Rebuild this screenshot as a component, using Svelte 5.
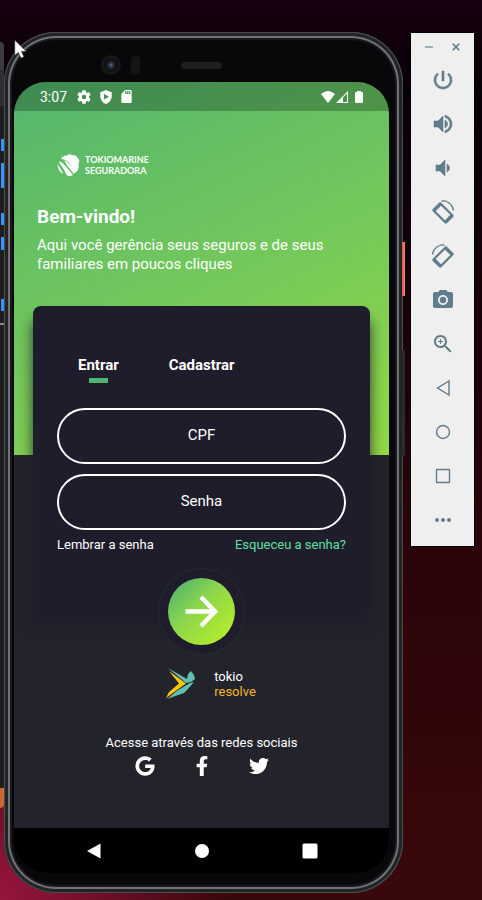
<script>
  let cpf = $state('');
  let password = $state('');
  let tab = $state('Entrar');
  const tabs = ['Entrar', 'Cadastrar'];

  const landscape =
    'M16.48 1.4c3.6 1.4 6.3 4.9 6.6 9.1h-1.5c-.4-5-4.4-8.6-9-9l-1.4.4-1-1C12.500-.2 14.600.6 16.480 1.400zM10.230 2.750c-.59-.59-1.540-.59-2.120 0L1.750 9.110c-.59.59-.59 1.540 0 2.120l12.020 12.020c.59.59 1.540.59 2.120 0l6.360-6.360c.59-.59.59-1.540 0-2.120L10.230 2.750zm3.700 17.500L4.700 11.070l5.400-5.400 9.200 9.200-5.370 5.380z';

  const tools = [
    { label: 'Power', bold: true, d: 'M13 3h-2v10h2V3zm4.83 2.17l-1.42 1.42C17.99 7.86 19 9.81 19 12c0 3.87-3.13 7-7 7s-7-3.13-7-7c0-2.190 1.010-4.140 2.580-5.420L6.170 5.170C4.230 6.820 3 9.260 3 12c0 4.970 4.030 9 9 9s9-4.030 9-9c0-2.740-1.230-5.180-3.170-6.830z' },
    { label: 'Volume up', bold: true, d: 'M3 9v6h4l5 5V4L7 9H3zm13.5 3c0-1.77-1.020-3.290-2.500-4.030v8.050c1.480-.73 2.500-2.250 2.500-4.020zM14 3.230v2.060c2.890.86 5 3.540 5 6.710s-2.110 5.850-5 6.710v2.060c4.010-.91 7-4.490 7-8.770s-2.990-7.860-7-8.770z' },
    { label: 'Volume down', bold: true, d: 'M18.500 12c0-1.770-1.020-3.290-2.500-4.030v8.050c1.480-.73 2.500-2.250 2.500-4.020zM5 9v6h4l5 5V4L9 9H5z' },
    { label: 'Rotate left', d: landscape },
    { label: 'Rotate right', d: landscape, flip: true },
    { label: 'Screenshot', d: 'M9 2L7.170 4H4c-1.100 0-2 .9-2 2v12c0 1.100.9 2 2 2h16c1.100 0 2-.9 2-2V6c0-1.100-.9-2-2-2h-3.170L15 2H9zm3 15c-2.760 0-5-2.240-5-5s2.240-5 5-5 5 2.240 5 5-2.240 5-5 5zm0-8.200a3.200 3.200 0 1 0 0 6.400 3.200 3.200 0 0 0 0-6.400z' },
    { label: 'Zoom', d: 'M15.500 14h-.79l-.28-.27C15.410 12.590 16 11.110 16 9.500 16 5.910 13.090 3 9.500 3S3 5.910 3 9.500 5.910 16 9.500 16c1.610 0 3.090-.59 4.230-1.570l.27.28v.79l5 4.990L20.490 19l-4.990-5zm-6 0C7.010 14 5 11.990 5 9.500S7.010 5 9.500 5 14 7.010 14 9.500 11.990 14 9.500 14zM9 7h1v2h2v1h-2v2H9v-2H7V9h2z' },
    { label: 'Back', line: 'M18 5v14L6.500 12z' },
    { label: 'Home', line: 'M12 5.500a6.500 6.500 0 1 0 0 13 6.500 6.500 0 0 0 0-13z' },
    { label: 'Overview', line: 'M6 5.500h12q.5 0 .5.500v12q0 .5-.5.500H6q-.5 0-.5-.500V6q0-.5.5-.500z' },
    { label: 'More', d: 'M6 10a2 2 0 1 0 0 4 2 2 0 0 0 0-4zm6 0a2 2 0 1 0 0 4 2 2 0 0 0 0-4zm6 0a2 2 0 1 0 0 4 2 2 0 0 0 0-4z' }
  ];

  const socials = [
    { label: 'Google', box: '0 0 488 512', d: 'M488 261.800C488 403.300 391.100 504 248 504 110.800 504 0 393.200 0 256S110.800 8 248 8c66.800 0 123 24.500 166.300 64.900l-67.500 64.900C258.500 52.600 94.300 116.600 94.300 256c0 86.500 69.100 156.600 153.700 156.600 98.200 0 135-70.400 140.800-106.900H248v-85.300h236.100c2.300 12.700 3.900 24.900 3.900 41.400z' },
    { label: 'Facebook', box: '0 0 320 512', d: 'M279.140 288l14.220-92.660h-88.910v-60.130c0-25.350 12.420-50.060 52.240-50.060h40.420V6.260S260.430 0 225.360 0c-73.220 0-121.080 44.380-121.080 124.720v70.620H22.890V288h81.390v224h100.170V288z' },
    { label: 'Twitter', box: '0 0 512 512', d: 'M459.370 151.716c.325 4.548.325 9.097.325 13.645 0 138.720-105.583 298.558-298.558 298.558-59.452 0-114.680-17.219-161.137-47.106 8.447.974 16.568 1.299 25.340 1.299 49.055 0 94.213-16.568 130.274-44.832-46.132-.975-84.792-31.188-98.112-72.772 6.498.974 12.995 1.624 19.818 1.624 9.421 0 18.843-1.300 27.614-3.573-48.081-9.747-84.143-51.980-84.143-102.985v-1.299c13.969 7.797 30.214 12.670 47.431 13.319-28.264-18.843-46.781-51.005-46.781-87.391 0-19.492 5.197-37.360 14.294-52.954 51.655 63.675 129.300 105.258 216.365 109.807-1.624-7.797-2.599-15.918-2.599-24.040 0-57.828 46.782-104.934 104.934-104.934 30.213 0 57.502 12.670 76.670 33.137 23.715-4.548 46.456-13.320 66.599-25.340-7.798 24.366-24.366 44.833-46.132 57.827 21.117-2.273 41.584-8.122 60.426-16.243-14.292 20.791-32.161 39.308-52.628 54.253z' }
  ];
</script>

<div class="desktop">
  <div class="behind" aria-hidden="true">
    <span class="title"></span>
    <i style:top="97px" style:height="12px"></i>
    <i style:top="121px" style:height="25px"></i>
    <i style:top="171px" style:height="12px"></i>
    <i style:top="195px" style:height="13px"></i>
    <i style:top="257px" style:height="12px"></i>
    <span class="rule"></span>
    <span class="foot"></span>
  </div>

  <div class="phone">
    <span class="side power"></span>
    <span class="side volume"></span>
    <div class="bezel"><span class="lens"></span><span class="sensor"></span><span class="speaker"></span></div>

    <div class="screen">
      <div class="status">
        <span class="time">3:07</span>
        <svg width="14" height="14" viewBox="2 2 20 20"><path fill-rule="evenodd" d="M19.140 12.940c.04-.3.060-.61.060-.94s-.02-.64-.07-.94l2.030-1.580c.18-.14.230-.41.120-.61l-1.920-3.320c-.12-.22-.37-.29-.59-.22l-2.390.96c-.5-.38-1.030-.7-1.620-.94l-.36-2.540c-.04-.24-.24-.41-.48-.41h-3.840c-.24 0-.43.17-.47.41l-.36 2.540c-.59.24-1.130.57-1.620.94l-2.390-.96c-.22-.08-.47 0-.59.22L2.740 8.870c-.12.21-.08.470.12.610l2.030 1.580c-.05.3-.09.630-.09.940s.02.640.070.940l-2.030 1.580c-.18.140-.23.410-.12.610l1.920 3.320c.12.220.37.290.59.220l2.390-.96c.5.380 1.030.7 1.620.94l.36 2.540c.05.240.24.410.48.410h3.840c.24 0 .44-.17.470-.41l.36-2.540c.59-.24 1.130-.56 1.620-.94l2.390.96c.22.080.47 0 .59-.22l1.920-3.320c.12-.22.070-.47-.12-.61l-2.010-1.580zM12 15.200a3.200 3.200 0 1 1 0-6.400 3.200 3.200 0 0 1 0 6.400z" /></svg>
        <svg width="12" height="14" viewBox="3 1 18 22"><path fill-rule="evenodd" d="M12 1L3 4.500V11c0 5.600 3.800 10.700 9 12 5.200-1.300 9-6.400 9-12V4.500L12 1zM9 7l7.500 4.500L9 16z" /></svg>
        <svg width="11" height="13" viewBox="4 2 16 20"><path fill-rule="evenodd" d="M18 2h-8L4 8v12c0 1.100.9 2 2 2h12c1.100 0 2-.9 2-2V4c0-1.100-.9-2-2-2zm-6 6h-2V4h2v4zm3 0h-2V4h2v4zm3 0h-2V4h2v4z" /></svg>
        <span class="spacer"></span>
        <svg width="14" height="12" viewBox="0 0 14 12"><path d="M0 3Q7-3 14 3L7 12z" /></svg>
        <svg class="signal" width="12" height="12" viewBox="0 0 12 12"><path fill-rule="evenodd" d="M12 0v12H0zM11 2.400L7 6.500V11h4z" /></svg>
        <svg width="8" height="12" viewBox="0 0 8 12"><path d="M2 1V0h4v1h1q1 0 1 1v9q0 1-1 1H1q-1 0-1-1V2q0-1 1-1z" /></svg>
      </div>

      <main>
        <div class="brand">
          <svg width="23" height="23" viewBox="0 0 23 23"><path d="M4 5Q6 1 10 1.500 12-.5 15 1q4-.5 5.500 2.500Q23.500 6 21.500 10q.5 3-3 4-3-1-5.500-4.500Q10 5.500 4 5z" /><path d="M1.500 7.500Q5 7.500 7.500 11l8.500 10q-3 1.500-6 .5Q7 15 1.500 7.500z" /><path d="M.6 10Q3 14 6.500 20 .5 17.500.6 10z" /><path d="M7 6.500q3 0 5 3l6.500 8.500-1.500 2-7-8.500Q9 8.500 7 6.500z" /><path d="M12 8q5 6 10 4-.5 4-3 6.500-4-3.500-7-10.500z" /></svg>
          <span>TOKIOMARINE<br />SEGURADORA</span>
        </div>
        <h1>Bem-vindo!</h1>
        <p class="intro">Aqui você gerência seus seguros e de seus familiares em poucos cliques</p>

        <form class="card" onsubmit={(e) => e.preventDefault()}>
          <div class="tabs">
            {#each tabs as name}
              <button type="button" class:active={tab === name} onclick={() => (tab = name)}>{name}</button>
            {/each}
          </div>
          <input type="text" aria-label="CPF" placeholder="CPF" bind:value={cpf} />
          <input type="password" aria-label="Senha" placeholder="Senha" bind:value={password} />
          <div class="links">
            <a href="#lembrar">Lembrar a senha</a>
            <a class="forgot" href="#esqueceu">Esqueceu a senha?</a>
          </div>
          <button class="go" aria-label="Entrar">
            <svg width="67" height="67" viewBox="0 0 67 67"><path d="M17.500 33.500H47M33 19l14 14.500L33 48" fill="none" stroke="#fff" stroke-width="4.600" /></svg>
          </button>
        </form>

        <div class="resolve">
          <svg width="30" height="32" viewBox="0 0 30 32"><path fill="#5fbfb3" d="M2 0l19 11 1-5 3-3 3 4 1 4-4 3-5 1zM1 31l11-9 12-7 4-1-6 7-4 4z" /><path fill="#ffc60b" d="M3 3l17 12.500L0 30l3-6 10-8.500z" /></svg>
          <span>tokio<br /><b>resolve</b></span>
        </div>

        <p class="access">Acesse através das redes sociais</p>
        <div class="socials">
          {#each socials as s}
            <a href="#{s.label}" aria-label={s.label}><svg width="20" height="20" viewBox={s.box}><path d={s.d} /></svg></a>
          {/each}
        </div>
      </main>

      <nav>
        <button aria-label="Voltar"><svg width="16" height="16" viewBox="0 0 16 16"><path d="M14.500.5v15L1 8z" /></svg></button>
        <button aria-label="Início"><svg width="16" height="16" viewBox="0 0 16 16"><circle cx="8" cy="8" r="7" /></svg></button>
        <button aria-label="Recentes"><svg width="16" height="16" viewBox="0 0 16 16"><rect x=".5" y=".5" width="15" height="15" rx="1.500" /></svg></button>
      </nav>
    </div>
  </div>

  <div class="toolbar">
    <div class="window">
      <button aria-label="Minimize"><svg width="8" height="8" viewBox="0 0 8 8"><path d="M0 4h8" stroke="#9fb0b9" stroke-width="2" /></svg></button>
      <button aria-label="Close"><svg width="8" height="8" viewBox="0 0 8 8"><path d="M.7.700l6.600 6.600M7.300.700L.7 7.300" stroke="#607d8b" stroke-width="1.600" /></svg></button>
    </div>
    {#each tools as t}
      <button aria-label={t.label}>
        <svg class:flip={t.flip} width="24" height="24" viewBox="0 0 24 24">
          {#if t.line}
            <path d={t.line} fill="none" stroke="#607d8b" stroke-width="1.400" />
          {:else}
            <path d={t.d} fill="#607d8b" fill-rule="evenodd" stroke="#607d8b" stroke-width={t.bold ? 0.6 : 0} />
          {/if}
        </svg>
      </button>
    {/each}
  </div>

  <svg class="cursor" width="14" height="20" viewBox="0 0 14 20"><path d="M.7 1v15.500l3.600-3 2.700 5.700 3-1.400-2.600-5.300h5z" fill="#fff" stroke="#222" stroke-width=".7" /></svg>
</div>

<style>
  :global(body) {
    margin: 0;
  }

  .desktop {
    position: relative;
    display: flex;
    align-items: flex-start;
    gap: 8px;
    min-height: 100vh;
    padding: 32px 8px 7px 4px;
    box-sizing: border-box;
    overflow: hidden;
    font-family: Roboto, 'Liberation Sans', sans-serif;
    color: #fff;
    background:
      radial-gradient(circle at 0 100%, #97153d 0, #97153d00 230px),
      linear-gradient(180deg, #16000f 0, #080008 90px, #14000a 260px, #2a0409 540px, #38080a 860px);
  }

  button {
    padding: 0;
    border: 0;
    background: none;
    color: inherit;
    font: inherit;
    cursor: pointer;
  }

  svg {
    display: block;
    fill: #fff;
  }

  .behind {
    position: absolute;
    left: 0;
    top: 42px;
    width: 4px;
    height: 766px;
    background: #1e1e1e;
    border-radius: 0 6px 6px 0;
    overflow: hidden;
  }

  .behind i,
  .behind span {
    position: absolute;
    left: 0;
    right: 0;
  }

  .behind i {
    left: 1px;
    background: #3794ff;
  }

  .behind .title {
    top: 0;
    height: 64px;
    background: linear-gradient(#3c3c3c 28px, #2f2f30 28px);
  }

  .behind .rule {
    top: 281px;
    height: 2px;
    background: #8a8a8a;
  }

  .behind .foot {
    bottom: 0;
    height: 20px;
    background: #cc6633;
  }

  .phone {
    position: relative;
    flex: 1;
    padding: 0 14px 20px 10px;
    border-radius: 52px;
    background: #08080a;
    box-shadow:
      inset 0 0 0 1px #4b4d50,
      inset 0 0 0 4px #222325,
      inset 0 0 0 6px #707276,
      inset 0 0 0 8px #1a1a1c;
  }

  .side {
    position: absolute;
    right: -2px;
    width: 3px;
  }

  .power {
    top: 210px;
    height: 54px;
    background: linear-gradient(90deg, #d9543f, #f08a74);
  }

  .volume {
    top: 318px;
    height: 106px;
    background: #2a2b2d;
  }

  .bezel {
    display: flex;
    align-items: center;
    gap: 10px;
    height: 50px;
    padding: 16px 0 0 87px;
    box-sizing: border-box;
  }

  .lens {
    width: 20px;
    height: 20px;
    border-radius: 50%;
    background: radial-gradient(circle, #5a6c94 0, #20242c 3px, #0c0d10 6px, #1b1b1c 8px, #141415 10px);
  }

  .sensor {
    width: 9px;
    height: 19px;
    border-radius: 4px;
    background: #141415;
  }

  .speaker {
    width: 41px;
    height: 7px;
    margin-left: 31px;
    border-radius: 4px;
    background: #1f1f20;
  }

  .screen {
    border-radius: 32px;
    overflow: hidden;
    background:
      linear-gradient(155deg, #52b66d 0, #6fc55e 45%, #92d945 100%) 0 0 / 100% 373px no-repeat,
      #23232b;
  }

  .status {
    display: flex;
    align-items: center;
    height: 29px;
    padding: 0 26px;
    background: #0000003d;
    font-size: 14px;
  }

  .time {
    width: 37px;
  }

  .status svg + svg {
    margin-left: 9px;
  }

  .status svg + .signal {
    margin-left: 1px;
  }

  .status .signal + svg {
    margin-left: 7px;
  }

  .spacer {
    flex: 1;
  }

  main {
    padding: 43px 19px 52px;
  }

  .brand {
    display: flex;
    align-items: center;
    gap: 5px;
    height: 22px;
    padding-left: 24px;
    font: 700 9px/11px Lato, 'Liberation Sans', sans-serif;
  }

  h1 {
    margin: 29px 4px 7px;
    font-size: 19px;
    line-height: 24px;
    font-weight: 700;
  }

  p {
    margin: 0;
  }

  .intro {
    max-width: 310px;
    margin: 0 4px 32px;
    font-size: 15px;
    line-height: 19px;
  }

  .card {
    display: flex;
    flex-direction: column;
    height: 306px;
    padding: 49px 24px 0;
    box-sizing: border-box;
    border-radius: 8px;
    background: #1f1c2b;
    box-shadow: 0 14px 14px #1f1c2bd8;
  }

  .tabs {
    display: flex;
    gap: 50px;
    padding-left: 21px;
    margin-bottom: 25px;
    font-size: 15px;
    line-height: 20px;
    font-weight: 700;
  }

  .tabs button::after {
    content: '';
    display: block;
    width: 19px;
    height: 5px;
    margin: 3px auto 0;
  }

  .tabs .active::after {
    background: #4fb371;
  }

  input {
    width: 100%;
    height: 56px;
    flex: none;
    box-sizing: border-box;
    padding: 0 24px 2px;
    border: 2px solid #fff;
    border-radius: 28px;
    background: transparent;
    color: #fff;
    font: 15px Roboto, 'Liberation Sans', sans-serif;
    text-align: center;
  }

  input + input {
    margin-top: 10px;
  }

  input::placeholder {
    color: #fff;
    opacity: 1;
  }

  .links {
    display: flex;
    justify-content: space-between;
    margin-top: 5px;
    font-size: 13px;
    line-height: 20px;
  }

  a {
    color: #fff;
    text-decoration: none;
  }

  .links .forgot {
    color: #5ce1a0;
  }

  .go {
    align-self: center;
    flex: none;
    margin-top: 13px;
    padding: 9px;
    border: 1px solid #23302f;
    border-radius: 50%;
    background: #1f1c2b;
  }

  .go svg {
    border-radius: 50%;
    background: linear-gradient(135deg, #4fb371 5%, #8ed74a 45%, #b5ec2b 90%);
  }

  .resolve {
    display: flex;
    justify-content: center;
    align-items: center;
    gap: 18px;
    margin: 56px 0 33px;
    padding-left: 19px;
    font-size: 13px;
    line-height: 15px;
  }

  .resolve b {
    font-weight: 400;
    color: #f5b62b;
  }

  .access {
    font-size: 13px;
    line-height: 20px;
    text-align: center;
  }

  .socials {
    display: flex;
    justify-content: center;
    gap: 37px;
    margin-top: 3px;
  }

  nav {
    display: flex;
    justify-content: center;
    gap: 92px;
    height: 45px;
    background: #000;
  }

  .toolbar {
    width: 63px;
    margin-top: 1px;
    box-shadow: 0 0 0 1px #000;
    background: #efefef;
    display: flex;
    flex-direction: column;
    padding-bottom: 4px;
  }

  .toolbar > button {
    display: flex;
    align-items: center;
    justify-content: center;
    height: 44px;
  }

  .window {
    display: flex;
    justify-content: center;
    gap: 19px;
    height: 25px;
    padding-top: 2px;
    box-sizing: border-box;
  }

  .flip {
    transform: scaleX(-1);
  }

  .cursor {
    position: absolute;
    left: 14px;
    top: 39px;
  }
</style>
